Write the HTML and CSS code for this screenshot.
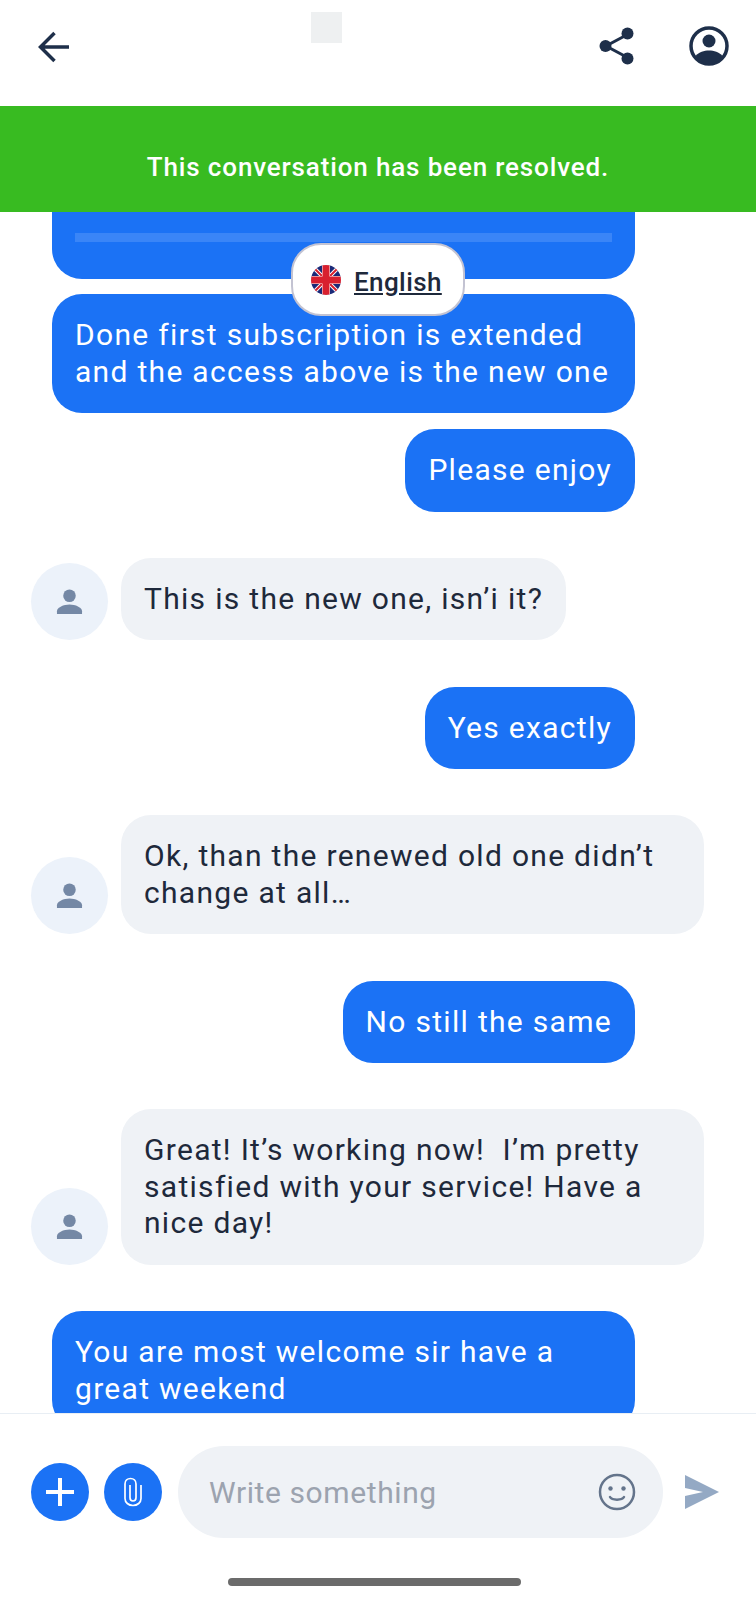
FILE: index.html
```html
<!DOCTYPE html>
<html lang="en">
<head>
<meta charset="utf-8">
<title>Chat</title>
<link rel="stylesheet" href="styles.css">
</head>
<body>
<div class="page">
  <header class="topbar">
    <svg class="icon-back" viewBox="0 0 32 32"><path d="M31 16H4M16.500 2 2.500 16 16.500 30" fill="none" stroke="#1e2f4a" stroke-width="3.500"/></svg>
    <div class="logo"></div>
    <div class="top-actions">
      <svg class="icon-share" viewBox="0 0 36 38"><path d="M28.5 7.5 7 19l21.500 11.500" fill="none" stroke="#1e2f4a" stroke-width="3"/><circle cx="28.500" cy="6.500" r="6" fill="#1e2f4a"/><circle cx="6.500" cy="19" r="6" fill="#1e2f4a"/><circle cx="28.500" cy="31.500" r="6" fill="#1e2f4a"/></svg>
      <svg class="icon-profile" viewBox="0 0 40 40"><circle cx="20" cy="20" r="18" fill="#fff" stroke="#1e2f4a" stroke-width="3.500"/><circle cx="20" cy="15" r="6.500" fill="#1e2f4a"/><path d="M6.500 30C10 26 15 24.500 20 24.500S30 26 33.500 30C30 35 25 37.500 20 37.500S10 35 6.500 30Z" fill="#1e2f4a"/></svg>
    </div>
  </header>
  <div class="banner">This conversation has been resolved.</div>
  <main class="chat">
    <div class="lang">
      <svg class="flag" viewBox="0 0 30 30">
        <defs><clipPath id="flag-clip"><circle cx="15" cy="15" r="15"/></clipPath></defs>
        <g clip-path="url(#flag-clip)">
          <rect width="30" height="30" fill="#1b2a78"/>
          <path d="M0 0 30 30M30 0 0 30" stroke="#fff" stroke-width="4"/>
          <path d="M0 0 30 30M30 0 0 30" stroke="#d8202f" stroke-width="2"/>
          <path d="M15 0V30M0 15H30" stroke="#fff" stroke-width="8"/>
          <path d="M15 0V30M0 15H30" stroke="#d8202f" stroke-width="7"/>
        </g>
      </svg>
      <span class="lang-name">English</span>
    </div>
    <div class="row out first">
      <div class="bubble clipped"><div class="bar"></div></div>
    </div>
    <div class="row out second">
      <div class="bubble wide">Done first subscription is extended and the access above is the new one</div>
    </div>
    <div class="row out near">
      <div class="bubble">Please enjoy</div>
    </div>
    <div class="row in far">
      <div class="avatar"><svg class="person" viewBox="0 0 28 28"><circle cx="14" cy="8" r="6.500"/><path d="M1 27v-3c0-4 7-7 13-7s13 3 13 7v3Z"/></svg></div>
      <div class="bubble">This is the new one, isn’i it?</div>
    </div>
    <div class="row out far">
      <div class="bubble">Yes exactly</div>
    </div>
    <div class="row in far">
      <div class="avatar"><svg class="person" viewBox="0 0 28 28"><circle cx="14" cy="8" r="6.500"/><path d="M1 27v-3c0-4 7-7 13-7s13 3 13 7v3Z"/></svg></div>
      <div class="bubble full">Ok, than the renewed old one didn’t change at all…</div>
    </div>
    <div class="row out far">
      <div class="bubble">No still the same</div>
    </div>
    <div class="row in far">
      <div class="avatar"><svg class="person" viewBox="0 0 28 28"><circle cx="14" cy="8" r="6.500"/><path d="M1 27v-3c0-4 7-7 13-7s13 3 13 7v3Z"/></svg></div>
      <div class="bubble full">Great! It’s working now! &nbsp;I’m pretty satisfied with your service! Have a nice day!</div>
    </div>
    <div class="row out far">
      <div class="bubble wide">You are most welcome sir have a great weekend</div>
    </div>
  </main>
  <footer class="composer">
    <div class="round"><svg class="round-icon" viewBox="0 0 30 30"><path d="M15 1V29M1 15H29" stroke="#fff" stroke-width="4" fill="none"/></svg></div>
    <div class="round"><svg class="round-icon" viewBox="0 0 30 30"><path d="M23 8V21.500C23 25.500 19.500 28.500 15 28.500S7 25.500 7 21.500V7C7 3.500 9.500 1.500 12.500 1.500S18 3.500 18 7V20.500C18 22.500 17 24 15 24S12 22.500 12 20.500V8" stroke="#fff" stroke-width="1.700" fill="none"/></svg></div>
    <div class="input">
      <span class="placeholder">Write something</span>
      <svg class="emoji" viewBox="0 0 38 38"><circle cx="19" cy="19" r="17" fill="none" stroke="#64748b" stroke-width="2.500"/><circle cx="12.500" cy="15.500" r="2.200" fill="#64748b"/><circle cx="25.500" cy="15.500" r="2.200" fill="#64748b"/><path d="M12 24c2 3.500 12 3.500 14 0" fill="none" stroke="#64748b" stroke-width="2.500" stroke-linecap="round"/></svg>
    </div>
    <svg class="send" viewBox="0 0 34 34"><path d="M0 0 34 17 0 34 0 21 18 17 0 13Z" fill="#94a9c4"/></svg>
  </footer>
  <div class="home-area"><div class="home-bar"></div></div>
</div>
</body>
</html>
```
FILE: styles.css
```css
* { box-sizing: border-box; }
html, body { margin: 0; padding: 0; background: #fff; }
body { font-family: Roboto, "Liberation Sans", sans-serif; }
.page { width: 756px; height: 1600px; display: flex; flex-direction: column; overflow: hidden; }

.topbar { height: 106px; flex: none; display: flex; align-items: flex-start; justify-content: space-between; position: relative; padding: 27px 27px 0 38px; }
.icon-back { width: 32px; height: 32px; margin-top: 4px; }
.logo { position: absolute; left: 311px; top: 12px; width: 31px; height: 31px; background: #eef0f1; }
.top-actions { display: flex; gap: 54px; align-items: center; margin-top: -1px; }
.icon-share { width: 36px; height: 38px; }
.icon-profile { width: 40px; height: 40px; }

.banner { height: 106px; flex: none; background: #38bb21; color: #fff; font-size: 26px; font-weight: 500; letter-spacing: 0.85px; display: flex; align-items: center; justify-content: center; padding-top: 16px; position: relative; z-index: 2; }

.chat { height: 1201px; flex: none; overflow: hidden; position: relative; padding: 0 52px 0 31px; display: flex; flex-direction: column; }
.row { display: flex; flex: none; align-items: flex-end; }
.row.out { justify-content: flex-end; padding-right: 69px; }
.row.in { gap: 13px; }
.row.near { margin-top: 16px; }
.row.second { margin-top: 15px; }
.row.far { margin-top: 46.300px; }
.row.first { margin-top: 0; }

.bubble { font-size: 30px; line-height: 36.500px; letter-spacing: 1.300px; padding: 23px 23px; border-radius: 30px; flex: none; }
.out .bubble { background: #1b72f5; color: #fff; }
.in .bubble { background: #eff2f6; color: #1e293b; }
.in .bubble.full { width: 583px; }
.out .bubble.wide { width: 583px; }
.bubble.clipped { width: 583px; height: 67px; padding: 21px 23px 0; border-radius: 0 0 30px 30px; }
.bar { height: 9px; background: #3a85f7; }

.avatar { width: 77px; height: 77px; flex: none; border-radius: 50%; background: #ecf2fa; display: flex; align-items: center; justify-content: center; }
.person { width: 27px; height: 27px; fill: #7488a5; }

.lang { position: absolute; left: 291px; top: 31px; width: 174px; height: 73px; background: #fff; border: 2px solid #c3c3d2; border-radius: 30px; display: flex; align-items: center; gap: 13px; padding-left: 18px; padding-top: 4px; z-index: 1; }
.flag { width: 30px; height: 30px; flex: none; margin-top: -4px; }
.lang-name { font-size: 26px; font-weight: 500; letter-spacing: 0.400px; color: #1e293b; text-decoration: underline; }

.composer { height: 159px; flex: none; border-top: 1px solid #e8eef4; display: flex; align-items: center; padding: 0 37px 2px 31px; background: #fff; position: relative; }
.round { width: 58px; height: 58px; flex: none; border-radius: 50%; background: #1b72f5; display: flex; align-items: center; justify-content: center; margin-right: 15px; }
.round-icon { width: 30px; height: 30px; }
.input { width: 485px; height: 92px; flex: none; margin-left: 1px; border-radius: 46px; background: #eff2f6; display: flex; align-items: center; justify-content: space-between; padding: 0 27px 0 31px; }
.placeholder { font-size: 30px; letter-spacing: 0.600px; color: #9ca3af; }
.emoji { width: 38px; height: 38px; }
.send { width: 34px; height: 34px; margin-left: 22px; flex: none; }

.home-area { flex: 1; display: flex; justify-content: center; padding-right: 7px; }
.home-bar { width: 293px; height: 8px; border-radius: 4px; background: #6b6b6b; margin-top: 6px; }
```
